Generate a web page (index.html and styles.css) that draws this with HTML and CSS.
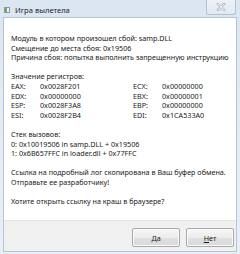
FILE: index.html
```html
<!DOCTYPE html>
<html lang="ru">
<head>
<meta charset="utf-8">
<title>Игра вылетела</title>
<link rel="stylesheet" href="styles.css">
</head>
<body>
<div class="window">
  <div class="titlebar">
    <svg class="app-icon" width="6" height="6" viewBox="0 0 6 6">
      <rect x="0.5" y="0.5" width="5" height="5" fill="#f4f6f4" stroke="#8a949c" stroke-width="1"/>
      <rect x="1" y="1" width="2" height="4" fill="#6fa86f"/>
    </svg>
    <span class="title">Игра вылетела</span>
    <div class="close">
      <svg width="12" height="8" viewBox="0 0 12 8">
        <path d="M3 1 L9 7 M9 1 L3 7" stroke="#9aa5b1" stroke-width="2.4" stroke-linecap="square"/>
        <path d="M3 1 L9 7 M9 1 L3 7" stroke="#eef1f5" stroke-width="1.2" stroke-linecap="square"/>
      </svg>
    </div>
  </div>
  <div class="client">
    <div class="content">
      <div class="block">
        <div>Модуль в котором произошел сбой: samp.DLL</div>
        <div>Смещение до места сбоя: 0x19506</div>
        <div>Причина сбоя: попытка выполнить запрещенную инструкцию</div>
      </div>
      <div class="block">
        <div>Значение регистров:</div>
        <div class="regs">
          <span>EAX:</span><span>0x0028F201</span><span>ECX:</span><span>0x00000000</span>
          <span>EDX:</span><span>0x00000000</span><span>EBX:</span><span>0x00000001</span>
          <span>ESP:</span><span>0x0028F3A8</span><span>EBP:</span><span>0x00000000</span>
          <span>ESI:</span><span>0x0028F2B4</span><span>EDI:</span><span>0x1CA533A0</span>
        </div>
      </div>
      <div class="block">
        <div>Стек вызовов:</div>
        <div>0: 0x10019506 in samp.DLL + 0x19506</div>
        <div>1: 0x6B657FFC in loader.dll + 0x77FFC</div>
      </div>
      <div class="block">
        <div>Ссылка на подробный лог скопирована в Ваш буфер обмена.</div>
        <div>Отправьте ее разработчику!</div>
      </div>
      <div class="block">
        <div>Хотите открыть ссылку на краш в браузере?</div>
      </div>
    </div>
    <div class="footer">
      <button class="btn"><u>Д</u>а</button>
      <button class="btn"><u>Н</u>ет</button>
    </div>
  </div>
</div>
</body>
</html>
```
FILE: styles.css
```css
* { box-sizing: border-box; }
html, body { margin: 0; padding: 0; }
body {
  width: 240px;
  height: 254px;
  overflow: hidden;
  font-family: "Noto Sans", "DejaVu Sans", sans-serif;
}
.window {
  width: 240px;
  height: 254px;
  display: flex;
  flex-direction: column;
  padding: 0 3px 2px 3px;
  background: linear-gradient(#dbe6f3, #e4ecf6 60%, #e9eff8);
}
.titlebar {
  height: 17px;
  display: flex;
  align-items: center;
  padding-left: 0;
}
.app-icon {
  display: block;
  margin-left: 1px;
  margin-right: 5px;
  margin-top: 2px;
}
.title {
  font-size: 7.6px;
  color: #1e1e1e;
  margin-top: 2px;
}
.close {
  margin-left: auto;
  align-self: flex-start;
  width: 30px;
  height: 15px;
  margin-right: 1px;
  border: 1px solid #b4c1cf;
  border-top: none;
  border-radius: 0 0 3px 3px;
  background: linear-gradient(#eef2f7, #e2e9f1);
  display: flex;
  align-items: center;
  justify-content: center;
}
.close svg { display: block; }
.client {
  flex: 1;
  display: flex;
  flex-direction: column;
  border: 1px solid #b9c4d0;
  background: #fff;
}
.content {
  flex: 1;
  padding: 16px 6px 0 7px;
  font-size: 7.2px;
  line-height: 9.6px;
  color: #1a1a1a;
}
.block { margin-bottom: 9.6px; }
.regs {
  display: grid;
  grid-template-columns: 29px 93px 29px auto;
}
.footer {
  height: 31px;
  background: #f0f0f0;
  border-top: 1px solid #e6e6e6;
  display: flex;
  justify-content: flex-end;
  align-items: flex-start;
  gap: 6px;
  padding: 7px 2px 0 0;
}
.btn {
  width: 48px;
  height: 19px;
  padding: 0;
  font-family: "Noto Sans", "DejaVu Sans", sans-serif;
  font-size: 7.2px;
  color: #1a1a1a;
  border: 1px solid #a8a8a8;
  border-radius: 2px;
  background: linear-gradient(#f7f7f7, #ececec 50%, #e0e0e0 51%, #d9d9d9);
  box-shadow: inset 0 0 0 1px #fbfbfb;
}
.btn u { text-decoration-thickness: 0.5px; text-underline-offset: 1px; }
```
